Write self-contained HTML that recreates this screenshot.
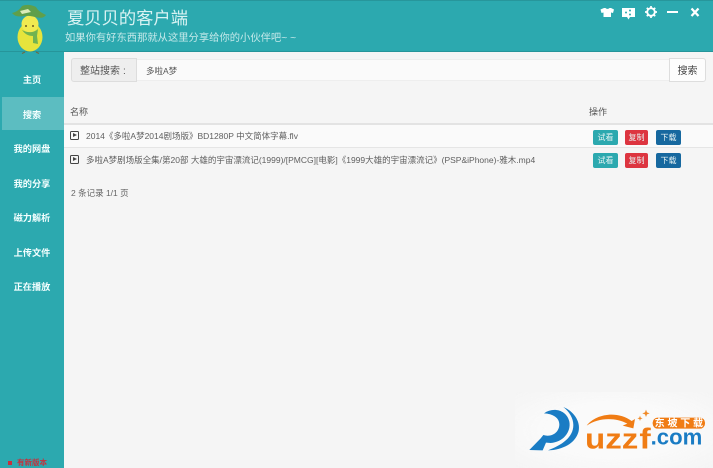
<!DOCTYPE html>
<html lang="zh"><head><meta charset="utf-8">
<style>
*{box-sizing:border-box}
html,body{margin:0;padding:0}
body{width:713px;height:468px;overflow:hidden;position:relative;background:#f5f5f5;font-family:"Liberation Sans","Noto Sans CJK SC",sans-serif;color:#555}
#wrap{position:absolute;left:0;top:0;width:713px;height:468px;filter:blur(.3px)}
.a{position:absolute;white-space:nowrap}
#top{left:0;top:0;width:713px;height:52px;background:#2ca9af;border-top:1px solid #27969b;border-bottom:1px solid #26959a}
#side{left:0;top:52px;width:64px;height:416px;background:#2ca9af}
.nav{position:absolute;left:0;width:64px;text-align:center;color:#f4ffff;font-size:9.200px;font-weight:bold;line-height:14px}
#act{left:2px;top:97px;width:62px;height:33px;background:#5cbdc1}
.btn{position:absolute;height:15px;border-radius:2px;color:#e8f4f4;font-size:8px;line-height:15px;text-align:center}
.t{background:#2ca9af;left:593px;width:25px}
.r{background:#dd3540;left:625px;width:23px}
.d{background:#16689f;left:656px;width:25px}
.row{font-size:8.500px;color:#5f5f5f;line-height:12px}
.ico{position:absolute;left:70px;width:9px;height:9px;border:1.3px solid #444;border-radius:1.5px}
.ico:after{content:"";position:absolute;left:2px;top:1px;border-left:4px solid #444;border-top:2.2px solid transparent;border-bottom:2.2px solid transparent}
</style></head><body><div id="wrap">
<div class="a" id="top"></div>
<div class="a" id="side"></div>
<svg class="a" style="left:0;top:0" width="64" height="56" viewBox="0 0 64 56">
<path d="M25 52l-3 1.500M36 52l3 1.500" stroke="#6b6b45" stroke-width="1.200"/>
<ellipse cx="30" cy="37" rx="12.500" ry="14.500" fill="#e6e43c"/>
<circle cx="30" cy="24" r="8.500" fill="#f0ea50"/>
<path d="M12 13C17 12 20 9 22 6 27 4 32 5 36 7 38 11 42 13 46 15 42 20 37 17 30 16 23 15 17 19 12 13Z" fill="#5f9f4b"/>
<path d="M20 11l8-2 3 3-9 2z" fill="#dcebb8"/>
<circle cx="26" cy="26" r="1" fill="#6b5a20"/><circle cx="33" cy="26" r="1" fill="#6b5a20"/>
<path d="M22 30C27 33 34 33 38 29L37 36 38 44 33 43 33 36C28 36 25 34 22 30Z" fill="#72b350"/>
</svg>
<div class="a" style="left:67px;top:6px;font-size:17.300px;line-height:25px;color:#d9f3f3">夏贝贝的客户端</div>
<div class="a" style="left:65px;top:31px;font-size:10.300px;line-height:15px;color:#c5e9ea">如果你有好东西那就从这里分享给你的小伙伴吧~ ~</div>
<svg class="a" style="left:0;top:0" width="713" height="24" viewBox="0 0 713 24">
<path d="M604 8l1.500 0c1 1.200 3 1.200 4 0l1.500 0 3 1.500-1 3.500-2-.5V17h-7.500v-4.500l-2 .5-1-3.500z" fill="#fff"/>
<path d="M622 8h13v9h-5l-1.500 2.500L627 17h-5z" fill="#fff"/>
<circle cx="626" cy="12.500" r="1" fill="#2ca9af"/><circle cx="630" cy="10.500" r="1" fill="#2ca9af"/><circle cx="630" cy="14.500" r="1" fill="#2ca9af"/>
<circle cx="651" cy="12" r="3.800" fill="none" stroke="#fff" stroke-width="1.900"/>
<path d="M651 6v2.500M651 15.500V18M645 12h2.500M654.500 12h2.500M646.800 7.800l1.700 1.700M653.500 14.500l1.700 1.700M646.800 16.200l1.700-1.700M653.500 9.500l1.700-1.700" stroke="#fff" stroke-width="1.700"/>
<path d="M667 12h11" stroke="#fff" stroke-width="2"/>
<path d="M691.500 8.500l7 7.500M698.500 8.500l-7 7.500" stroke="#fff" stroke-width="2.300"/>
</svg>

<div class="a" id="act"></div>
<div class="nav" style="top:73px">主页</div>
<div class="nav" style="top:108px">搜索</div>
<div class="nav" style="top:142px">我的网盘</div>
<div class="nav" style="top:177px">我的分享</div>
<div class="nav" style="top:211px">磁力解析</div>
<div class="nav" style="top:246px">上传文件</div>
<div class="nav" style="top:280px">正在播放</div>
<div class="a" style="left:8px;top:461px;width:3.500px;height:4px;background:#c6303c"></div>
<div class="a" style="left:17px;top:457px;font-size:7.500px;line-height:11px;color:#c6303c;font-weight:bold">有新版本</div>

<div class="a" style="left:71px;top:58px;width:66px;height:24px;background:#eee;border:1px solid #ddd;border-radius:3px 0 0 3px;font-size:10px;line-height:25px;color:#555;padding-left:8px">整站搜索<span style="margin-left:3px">:</span></div>
<div class="a" style="left:137px;top:59px;width:532px;height:22px;background:#fafafa;border-top:1px solid #eee;border-bottom:1px solid #eee;font-size:8.500px;line-height:22px;color:#555;padding-left:9px">多啦A梦</div>
<div class="a" style="left:669px;top:58px;width:37px;height:24px;background:#fdfdfd;border:1px solid #ddd;border-radius:0 3px 3px 0;font-size:10px;line-height:25px;text-align:center;color:#444">搜索</div>

<div class="a" style="left:70px;top:106px;font-size:9px;line-height:12px;color:#555">名称</div>
<div class="a" style="left:589px;top:106px;font-size:9px;line-height:12px;color:#555">操作</div>
<div class="a" style="left:64px;top:123px;width:649px;height:2px;background:#e3e3e3"></div>
<div class="a" style="left:64px;top:125px;width:649px;height:22px;background:#fafafa"></div>
<div class="a" style="left:64px;top:147px;width:649px;height:1px;background:#e5e5e5"></div>
<div class="ico" style="top:131px"></div>
<div class="a row" style="left:86px;top:130px">2014《多啦A梦2014剧场版》BD1280P 中文简体字幕.flv</div>
<div class="ico" style="top:155px"></div>
<div class="a row" style="left:86px;top:154px">多啦A梦剧场版全集/第20部 大雄的宇宙漂流记(1999)/[PMCG][电影]《1999大雄的宇宙漂流记》(PSP&amp;iPhone)-雅木.mp4</div>
<div class="btn t" style="top:130px">试看</div><div class="btn r" style="top:130px">复制</div><div class="btn d" style="top:130px">下载</div>
<div class="btn t" style="top:153px">试看</div><div class="btn r" style="top:153px">复制</div><div class="btn d" style="top:153px">下载</div>
<div class="a" style="left:71px;top:187px;font-size:8.500px;line-height:12px;color:#666">2 条记录 1/1 页</div>

<div class="a" style="left:515px;top:392px;width:198px;height:76px;background:radial-gradient(ellipse at center,#fafafa 45%,rgba(245,245,245,0) 100%)"></div>
<svg class="a" style="left:520px;top:395px" width="193" height="73" viewBox="0 0 579 219">
<path d="M72 55C100 35 140 45 148 80 154 112 128 142 92 144L78 143 68 166 28 165 62 130 70 120C95 128 118 112 118 88 118 68 98 56 72 55Z" fill="#1a7cc4"/>
<path d="M130 36C160 48 182 78 176 108 170 135 145 158 100 165L84 166C125 150 160 128 160 90 160 70 148 50 130 36Z" fill="#1a7cc4"/>
<path d="M200 92C225 58 290 45 335 78L345 72 340 100 308 92 322 86C285 66 235 68 200 92Z" fill="#f07c14"/>
<path d="M378 44l3 8 8 3-8 3-3 8-3-8-8-3 8-3z" fill="#f08a28"/>
<path d="M360 62l2 6 6 2-6 2-2 6-2-6-6-2 6-2z" fill="#f08a28"/>
<rect x="398" y="68" width="157" height="33" rx="15" fill="#f07c14"/>
<text x="404" y="95" font-size="30" font-weight="bold" fill="#fff" font-family="Liberation Sans,Noto Sans CJK SC,sans-serif" textLength="145">东坡下载</text>
<text x="195" y="160" font-size="86" font-weight="bold" fill="#f07c14" font-family="Liberation Sans,sans-serif" textLength="160" lengthAdjust="spacingAndGlyphs">uzz</text>
<text x="358" y="160" font-size="86" font-weight="bold" fill="#f07c14" font-family="Liberation Sans,sans-serif" textLength="34" lengthAdjust="spacingAndGlyphs">f</text>
<text x="392" y="148" font-size="66" font-weight="bold" fill="#1a7cc4" font-family="Liberation Sans,sans-serif" textLength="155" lengthAdjust="spacingAndGlyphs">.com</text>
</svg>
</div></body></html>
